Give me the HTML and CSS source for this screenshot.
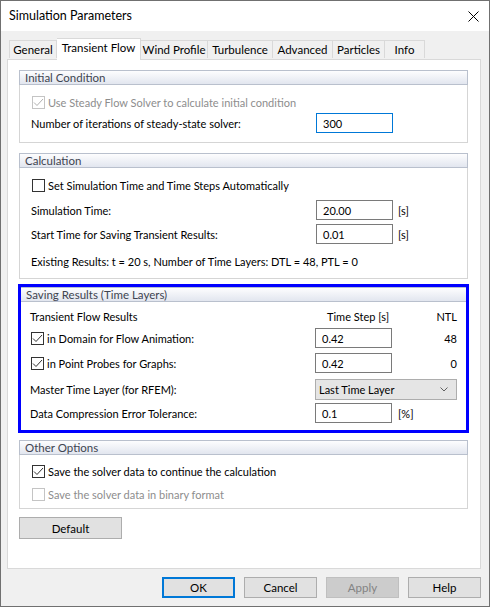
FILE: index.html
```html
<!DOCTYPE html>
<html lang="en">
  <head>
    <meta charset="UTF-8" />
    <title>Simulation Parameters</title>
    <link rel="stylesheet" href="styles.css">
  </head>
  <body>
    <div class="window">
      <div class="titlebar">
        <span class="title">Simulation Parameters</span>
        <svg class="close" width="11" height="11" viewBox="0 0 11 11">
          <path d="M0.5 0.5 L10.5 10.5 M10.5 0.5 L0.5 10.5" stroke="#000" stroke-width="1" fill="none" />
        </svg>
      </div>

      <div class="client">
        <div class="tabs">
          <div class="tab t-general">General</div>
          <div class="tab t-transient active">Transient Flow</div>
          <div class="tab t-wind">Wind Profile</div>
          <div class="tab t-turb">Turbulence</div>
          <div class="tab t-adv">Advanced</div>
          <div class="tab t-part">Particles</div>
          <div class="tab t-info">Info</div>
        </div>

        <div class="panel">
          <!-- Initial Condition -->
          <div class="group g-initial">
            <div class="group-head">Initial Condition</div>
            <div class="group-body">
              <div class="row r1">
                <label class="check disabled">
                  <span class="box checked"><svg width="11" height="11" viewBox="0 0 11 11"><path d="M1 5.5 L4 8.5 L10 2" /></svg></span>
                  Use Steady Flow Solver to calculate initial condition
                </label>
              </div>
              <div class="row r2">
                <span class="label">Number of iterations of steady-state solver:</span>
                <span class="field focus">300</span>
              </div>
            </div>
          </div>

          <!-- Calculation -->
          <div class="group g-calc">
            <div class="group-head">Calculation</div>
            <div class="group-body">
              <div class="row r1">
                <label class="check">
                  <span class="box"></span>
                  Set Simulation Time and Time Steps Automatically
                </label>
              </div>
              <div class="row r2">
                <span class="label">Simulation Time:</span>
                <span class="field">20.00</span>
                <span class="unit">[s]</span>
              </div>
              <div class="row r3">
                <span class="label">Start Time for Saving Transient Results:</span>
                <span class="field">0.01</span>
                <span class="unit">[s]</span>
              </div>
              <div class="row r4">
                <span class="label wide">Existing Results: t = 20 s, Number of Time Layers: DTL = 48, PTL = 0</span>
              </div>
            </div>
          </div>

          <!-- Saving Results -->
          <div class="group g-saving">
            <div class="group-head">Saving Results (Time Layers)</div>
            <div class="group-body">
              <div class="row r1">
                <span class="label">Transient Flow Results</span>
                <span class="colhead">Time Step [s]</span>
                <span class="ntl">NTL</span>
              </div>
              <div class="row r2">
                <label class="check">
                  <span class="box checked"><svg width="11" height="11" viewBox="0 0 11 11"><path d="M1 5.5 L4 8.5 L10 2" /></svg></span>
                  in Domain for Flow Animation:
                </label>
                <span class="field">0.42</span>
                <span class="ntl">48</span>
              </div>
              <div class="row r3">
                <label class="check">
                  <span class="box checked"><svg width="11" height="11" viewBox="0 0 11 11"><path d="M1 5.5 L4 8.5 L10 2" /></svg></span>
                  in Point Probes for Graphs:
                </label>
                <span class="field">0.42</span>
                <span class="ntl">0</span>
              </div>
              <div class="row r4">
                <span class="label">Master Time Layer (for RFEM):</span>
                <span class="select">
                  Last Time Layer
                  <svg width="8" height="5" viewBox="0 0 8 5"><path d="M0.5 0.5 L4 4 L7.5 0.5" stroke="#606060" fill="none" /></svg>
                </span>
              </div>
              <div class="row r5">
                <span class="label">Data Compression Error Tolerance:</span>
                <span class="field">0.1</span>
                <span class="unit pct">[%]</span>
              </div>
            </div>
          </div>

          <!-- Other Options -->
          <div class="group g-other">
            <div class="group-head">Other Options</div>
            <div class="group-body">
              <div class="row r1">
                <label class="check">
                  <span class="box checked"><svg width="11" height="11" viewBox="0 0 11 11"><path d="M1 5.5 L4 8.5 L10 2" /></svg></span>
                  Save the solver data to continue the calculation
                </label>
              </div>
              <div class="row r2">
                <label class="check disabled">
                  <span class="box"></span>
                  Save the solver data in binary format
                </label>
              </div>
            </div>
          </div>

          <button class="btn default">Default</button>
        </div>

        <div class="actions">
          <button class="btn primary">OK</button>
          <button class="btn">Cancel</button>
          <button class="btn" disabled>Apply</button>
          <button class="btn">Help</button>
        </div>
      </div>
    </div>
  </body>
</html>
```

FILE: styles.css
```css
* {
  box-sizing: border-box;
}
html,
body {
  margin: 0;
  padding: 0;
}
body {
  font-family: Lato, "Noto Sans", sans-serif;
  font-size: 11px;
  color: #000;
  background: #f0f0f0;
}
.window {
  width: 490px;
  height: 607px;
  border: 1px solid #707070;
  background: #f0f0f0;
  display: flex;
  flex-direction: column;
}
.titlebar {
  height: 30px;
  background: #fff;
  display: flex;
  align-items: center;
  justify-content: space-between;
  padding: 0 10px 0 8px;
  flex-shrink: 0;
}
.title {
  font-size: 12.5px;
  margin-top: -1px;
}
.close {
  display: block;
}
.client {
  flex: 1;
  padding: 7px 8px 0 6px;
  display: flex;
  flex-direction: column;
}

/* tab strip */
.tabs {
  display: flex;
  align-items: flex-end;
  height: 21px;
  padding-left: 2px;
  position: relative;
  z-index: 1;
}
.tab {
  height: 18px;
  border: 1px solid #d9d9d9;
  border-bottom: none;
  border-left: none;
  background: #f0f0f0;
  text-align: center;
  line-height: 18px;
  margin-bottom: 1px;
  white-space: nowrap;
  font-size: 11.5px;
}
.tab:first-child {
  border-left: 1px solid #d9d9d9;
}
.tab.active {
  height: 22px;
  margin-bottom: -1px;
  background: #fff;
  border-left: none;
  line-height: 18px;
}
.t-general { width: 48px; }
.t-transient { width: 84px; }
.t-wind { width: 67px; }
.t-turb { width: 65px; }
.t-adv { width: 60px; }
.t-part { width: 52px; }
.t-info { width: 40px; }

.panel {
  height: 510px;
  border: 1px solid #d9d9d9;
  background: #fff;
  padding: 10px 12px 0 11px;
  display: flex;
  flex-direction: column;
}

/* group boxes */
.group {
  border: 1px solid #d5d5d5;
  border-top: none;
}
.group-head {
  height: 15px;
  margin: 0 -1px;
  border: 1px solid #b9c0cd;
  background: linear-gradient(#fdfdfe, #e2e6ef);
  color: #3e4450;
  line-height: 13px;
  padding-left: 5px;
  font-size: 11.5px;
}
.group-body {
  padding: 0 0 0 11px;
  display: flex;
  flex-direction: column;
}
.row {
  display: grid;
  grid-template-columns: 285px 77px 65px;
  align-items: center;
  height: 20px;
  white-space: nowrap;
}
.label.wide {
  grid-column: 1 / 4;
}
.field {
  height: 20px;
  border: 1px solid #7a7a7a;
  padding-left: 6px;
  line-height: 19px;
}
.field.focus {
  border-color: #0078d7;
}
.unit {
  padding-left: 5px;
}
.unit.pct {
  padding-left: 6px;
}
.colhead {
  padding-left: 12px;
}
.ntl {
  text-align: right;
}

/* checkboxes */
.check {
  display: flex;
  align-items: center;
  gap: 3px;
  margin-left: 1px;
}
.box {
  flex-shrink: 0;
  width: 13px;
  height: 13px;
  border: 1px solid #333;
  background: #fff;
  display: flex;
  align-items: center;
  justify-content: center;
}
.box svg path {
  fill: none;
  stroke: #333;
  stroke-width: 1;
}
.check.disabled {
  color: #8d8d8d;
}
.check.disabled .box {
  border-color: #c4c4c4;
}
.check.disabled .box svg path {
  stroke: #b0b0b0;
}

/* combo box */
.select {
  grid-column: 2 / 4;
  height: 21px;
  border: 1px solid #adadad;
  background: #e5e5e5;
  display: flex;
  align-items: center;
  justify-content: space-between;
  padding: 0 8px 0 3px;
}

.g-initial .r1 { margin-top: 7px; }
.g-initial .r2 { margin-top: 1px; }
.g-initial .group-body { padding-bottom: 9px; }

.g-calc { margin-top: 10px; }
.g-calc .r1 { margin-top: 7px; }
.g-calc .r2 { margin-top: 5px; }
.g-calc .r3 { margin-top: 4px; }
.g-calc .r4 { margin-top: 7px; }
.g-calc .group-body { padding-bottom: 7px; }

.g-saving {
  margin: 5px -1px 0;
  border: 3px solid #0000ff;
}
.g-saving .group-head {
  margin: 0;
  border-top: 1px solid #b9c0cd;
  border-left: none;
  border-right: none;
}
.g-saving .group-body { padding-left: 9px; padding-bottom: 7px; }
.g-saving .r1 { margin-top: 4px; }
.g-saving .r2 { margin-top: 2px; }
.g-saving .r3 { margin-top: 5px; }
.g-saving .r4 { margin-top: 6px; height: 21px; }
.g-saving .r5 { margin-top: 3px; }

.g-other { margin-top: 7px; }
.g-other .r1 { margin-top: 6px; }
.g-other .r2 { margin-top: 3px; }
.g-other .group-body { padding-bottom: 4px; }

/* push buttons */
.btn {
  font-family: inherit;
  font-size: 11.5px;
  color: #000;
  width: 73px;
  height: 21px;
  border: 1px solid #adadad;
  background: #e1e1e1;
  padding: 0;
  margin: 0;
}
.btn.default {
  width: 103px;
  height: 22px;
  margin-top: 8px;
}
.btn.primary {
  border: 2px solid #0078d7;
}
.btn:disabled {
  background: #cccccc;
  border-color: #bfbfbf;
  color: #838383;
}
.actions {
  display: flex;
  justify-content: flex-end;
  gap: 9px;
  padding-top: 8px;
}
```
